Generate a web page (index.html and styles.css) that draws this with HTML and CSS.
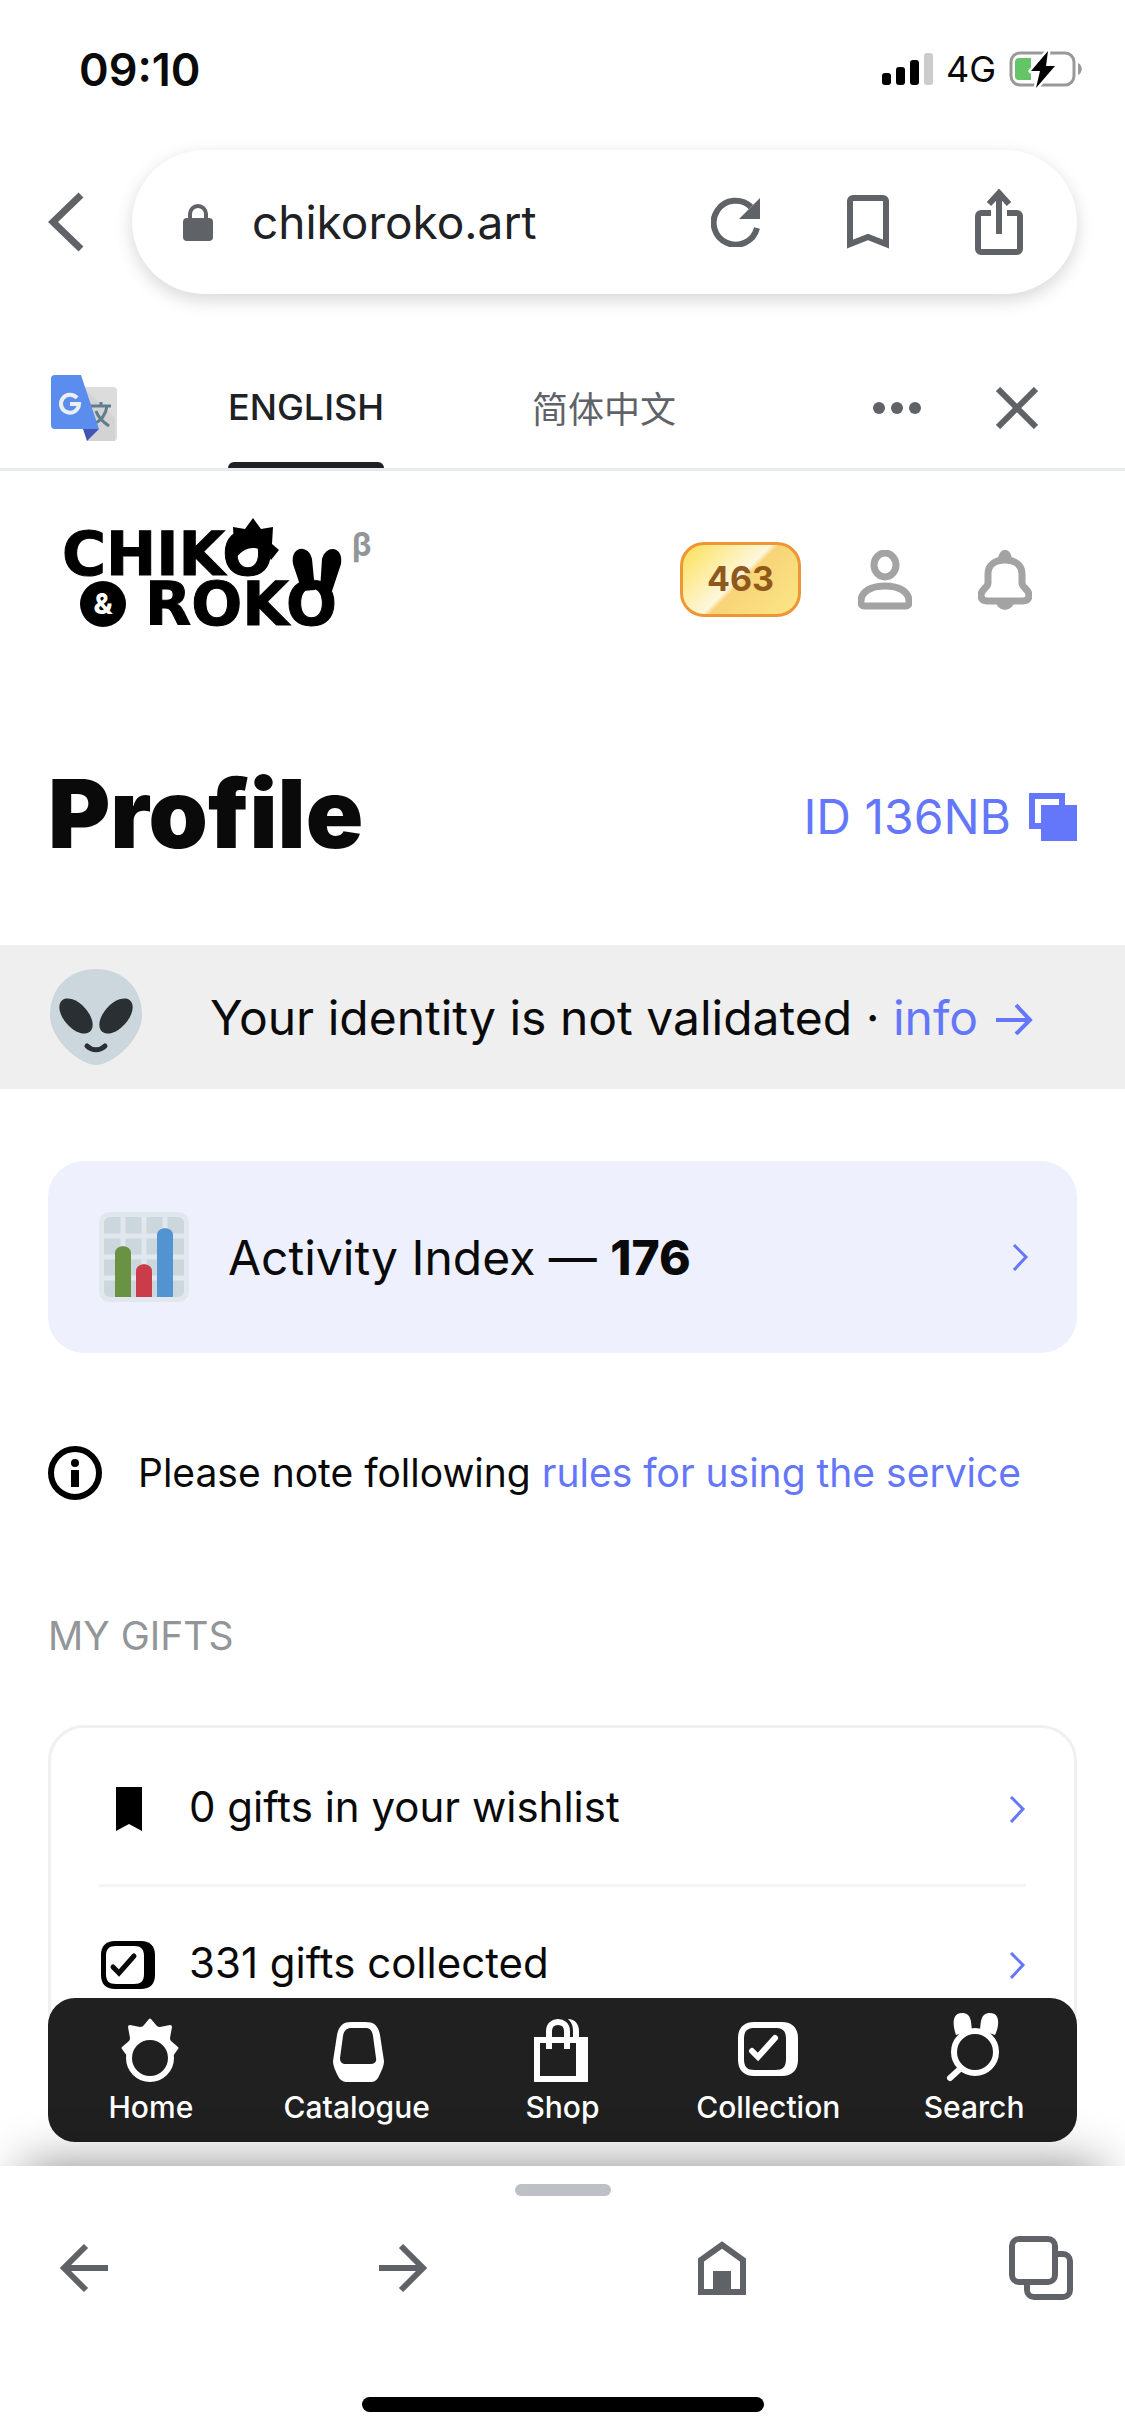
FILE: index.html
```html
<!DOCTYPE html>
<html lang="en">
<head>
<meta charset="utf-8">
<meta name="viewport" content="width=device-width, initial-scale=1">
<title>Profile – Chiko &amp; Roko</title>
<link rel="stylesheet" href="styles.css">
</head>
<body>
<div class="screen">
  <div class="status">
    <span class="status-time">09:10</span>
    <div class="status-right">
      <svg width="51" height="32" viewBox="0 0 51 32" aria-hidden="true">
        <rect x="0" y="20" width="9" height="12" rx="3"/>
        <rect x="14" y="14" width="9" height="18" rx="3"/>
        <rect x="28" y="7" width="9" height="25" rx="3"/>
        <rect x="42" y="0" width="9" height="32" rx="3" fill="#ccc"/>
      </svg>
      <span class="status-net">4G</span>
      <svg width="74" height="38" viewBox="0 0 74 38" aria-hidden="true">
        <rect x="2" y="3" width="63" height="32" rx="9" fill="none" stroke="#999" stroke-width="3"/>
        <path d="M69 13c5 2 5 10 0 12z" fill="#999"/>
        <path d="M10 8h12v22H10a4 4 0 0 1-4-4V12a4 4 0 0 1 4-4z" fill="#65c466"/>
        <path d="M39 1L22 21h9l-4 17L46 16h-9z" stroke="#fff" stroke-width="5" stroke-linejoin="round"/>
        <path d="M39 1L22 21h9l-4 17L46 16h-9z"/>
      </svg>
    </div>
  </div>

  <header class="browser">
    <button class="icon-btn" aria-label="Back">
      <svg width="36" height="60" viewBox="0 0 36 60"><path d="M33 3L5 30l28 27" fill="none" stroke="#5f6368" stroke-width="7"/></svg>
    </button>
    <div class="omnibox">
      <svg width="30" height="39" viewBox="0 0 30 39" fill="#5f6368" aria-hidden="true">
        <path d="M7 18V11a8 8 0 0 1 16 0v7" fill="none" stroke="#5f6368" stroke-width="4"/>
        <rect x="0" y="15" width="30" height="23" rx="4"/>
      </svg>
      <span class="url">chikoroko.art</span>
      <button class="icon-btn" aria-label="Reload">
        <svg width="50" height="50" viewBox="0 0 50 50"><path d="M46 31A22 22 0 1 1 40 10" fill="none" stroke="#5f6368" stroke-width="6"/><path d="M49 1v21H28z" fill="#5f6368"/></svg>
      </button>
      <button class="icon-btn" aria-label="Bookmark">
        <svg width="42" height="54" viewBox="0 0 42 54"><path d="M3 49V6a3 3 0 0 1 3-3h30a3 3 0 0 1 3 3v43L21 42z" fill="none" stroke="#5f6368" stroke-width="6"/></svg>
      </button>
      <button class="icon-btn" aria-label="Share">
        <svg width="48" height="66" viewBox="0 0 48 66" fill="none" stroke="#5f6368" stroke-width="6"><path d="M16 24H6a3 3 0 0 0-3 3v33a3 3 0 0 0 3 3h36a3 3 0 0 0 3-3V27a3 3 0 0 0-3-3H32M24 45V6"/><path d="M14 15L24 4l10 11"/></svg>
      </button>
    </div>
  </header>

  <div class="translate">
    <svg width="66" height="66" viewBox="0 0 66 66" aria-hidden="true">
      <path d="M26 12h36a4 4 0 0 1 4 4v46a4 4 0 0 1-4 4H36z" fill="#dcdcdc"/>
      <path d="M33 13l31 30v23H36z" fill="#d3d3d3"/>
      <path d="M40 31h20M50 27v4M43 49c8-4 12-10 13-18M45 36c2 6 7 11 13 15" fill="none" stroke="#607d8b" stroke-width="3"/>
      <path d="M32 54h16L36 66z" fill="#4554b4"/>
      <path d="M4 0h26l18 54H4a4 4 0 0 1-4-4V4a4 4 0 0 1 4-4z" fill="#5b8def"/>
      <path d="M26 23a9 9 0 1 0 2 6h-9" fill="none" stroke="#eee" stroke-width="4"/>
    </svg>
    <div class="tabs">
      <button class="tab tab-on">ENGLISH</button>
      <button class="tab" lang="zh-CN">简体中文</button>
    </div>
    <div class="translate-actions">
      <button class="icon-btn" aria-label="More">
        <svg width="48" height="12" viewBox="0 0 48 12" fill="#5f6368"><circle cx="6" cy="6" r="6"/><circle cx="24" cy="6" r="6"/><circle cx="42" cy="6" r="6"/></svg>
      </button>
      <button class="icon-btn" aria-label="Close">
        <svg width="42" height="42" viewBox="0 0 42 42"><path d="M2 2l38 38M40 2L2 40" stroke="#5f6368" stroke-width="6"/></svg>
      </button>
    </div>
  </div>

  <div class="page">
    <header class="site-head">
      <a class="logo" href="#" aria-label="Chiko &amp; Roko beta">
        <svg width="312" height="124" viewBox="0 0 312 124">
          <g class="logo-type">
            <text x="-2" y="57">CHIKO</text>
            <text x="81" y="107">ROKO</text>
          </g>
          <path d="M171 42l-8-10 7-6-1-17 12 2 8-11 8 11 12-2-1 17 7 6-8 10c-9-16-27-16-36 0z"/>
          <path d="M238 73l-9-27c-3-19 16-20 19-5l3 31zM256 72l2-31c4-15 22-13 19 5l-9 27z"/>
          <circle cx="39" cy="86" r="23"/>
          <text class="logo-amp" x="39" y="96">&amp;</text>
          <text class="logo-beta" x="288" y="38">β</text>
        </svg>
      </a>
      <div class="head-actions">
        <a class="coins" href="#">463</a>
        <a class="head-icon" href="#" aria-label="Account">
          <svg width="54" height="60" viewBox="0 0 54 60" fill="none" stroke="#a3a3a3" stroke-width="7"><ellipse cx="27" cy="15" rx="11" ry="12"/><path d="M6 56h42a3 3 0 0 0 3-3c1-12-11-17-24-17S2 41 3 53a3 3 0 0 0 3 3z"/></svg>
        </a>
        <a class="head-icon" href="#" aria-label="Notifications">
          <svg width="54" height="60" viewBox="0 0 54 60" fill="#a3a3a3"><path d="M10 24c0-9 7-14 17-14s17 5 17 14v9c0 5 7 6 7 12 0 4-2 6-6 6H9c-4 0-6-2-6-6 0-6 7-7 7-12z" fill="none" stroke="#a3a3a3" stroke-width="7"/><path d="M20 11c0-15 14-15 14 0zM18 53h18c-3 9-15 9-18 0z"/></svg>
        </a>
      </div>
    </header>

    <div class="title-row">
      <h1>Profile</h1>
      <button class="copy-id">ID 136NB
        <svg width="48" height="48" viewBox="0 0 48 48" aria-hidden="true"><path d="M0 0h36v12h-6V6H6v24h6v6H0z"/><path d="M12 12h36v36H12z"/></svg>
      </button>
    </div>

    <div class="banner">
      <svg width="92" height="96" viewBox="0 0 92 96" aria-hidden="true">
        <path d="M46 0c27 0 46 19 46 46 0 25-30 50-46 50S0 71 0 46C0 19 19 0 46 0z" fill="#ccd6dd"/>
        <g fill="#292f33"><ellipse cx="26" cy="47" rx="12" ry="21" transform="rotate(-42 26 47)"/><ellipse cx="66" cy="47" rx="12" ry="21" transform="rotate(42 66 47)"/></g>
        <path d="M37 77c5 5 13 5 18 0" fill="none" stroke="#292f33" stroke-width="5" stroke-linecap="round"/>
      </svg>
      <p>Your identity is not validated · <a href="#">info <svg class="go" width="37" height="32" viewBox="0 0 37 32" aria-hidden="true"><path d="M0 17h34M20 2l14 15-14 14" fill="none" stroke="#6477fa" stroke-width="4"/></svg></a></p>
    </div>

    <a class="activity" href="#">
      <svg width="90" height="90" viewBox="0 0 90 90" aria-hidden="true">
        <rect width="90" height="90" rx="10" fill="#e1e8ed"/>
        <rect x="5" y="5" width="80" height="80" rx="6" fill="#ccd6dd"/>
        <path d="M24 5v80M45 5v80M66 5v80M5 24h80M5 45h80M5 66h80" stroke="#e1e8ed" stroke-width="5"/>
        <path d="M16 85V41c0-9 16-9 16 0v44z" fill="#699343"/>
        <path d="M37 85V59c0-9 16-9 16 0v26z" fill="#ca3c49"/>
        <path d="M58 85V23c0-9 16-9 16 0v62z" fill="#5293d2"/>
      </svg>
      <span>Activity Index — <b>176</b></span>
      <svg class="chev" width="17" height="27" viewBox="0 0 17 27" aria-hidden="true"><path d="M2 1l12 12L2 26"/></svg>
    </a>

    <div class="note">
      <svg width="54" height="54" viewBox="0 0 54 54" aria-hidden="true"><circle cx="27" cy="27" r="24" fill="none" stroke="#000" stroke-width="6"/><circle cx="27" cy="17" r="4"/><path d="M23 24h8v17h-8z"/></svg>
      <p>Please note following <a href="#">rules for using the service</a></p>
    </div>

    <h2>MY GIFTS</h2>
    <ul class="gifts">
      <li><a href="#">
        <svg width="54" height="48" viewBox="0 0 54 48" aria-hidden="true"><path d="M15 2h26v44l-13-7-13 7z"/></svg>
        <span>0 gifts in your wishlist</span>
        <svg class="chev" width="17" height="27" viewBox="0 0 17 27" aria-hidden="true"><path d="M2 1l12 12L2 26"/></svg>
      </a></li>
      <li><a href="#">
        <svg width="54" height="48" viewBox="0 0 54 48" aria-hidden="true"><path fill-rule="evenodd" d="M14 0h26c9 0 14 5 14 14v20c0 9-5 14-14 14H14C5 48 0 43 0 34V14C0 5 5 0 14 0zm1 5c-7 0-10 3-10 10v18c0 7 3 10 10 10h18c7 0 10-3 10-10V15c0-7-3-10-10-10z"/><path d="M12 26l6 6 15-17" fill="none" stroke="#0a0a0a" stroke-width="5" stroke-linecap="round"/></svg>
        <span>331 gifts collected</span>
        <svg class="chev" width="17" height="27" viewBox="0 0 17 27" aria-hidden="true"><path d="M2 1l12 12L2 26"/></svg>
      </a></li>
    </ul>

    <nav class="dock">
      <a href="#">
        <svg width="60" height="72" viewBox="1 0 60 72" fill="#fff" aria-hidden="true"><path d="M7 40l-5-7q-1-1 0-2l7-6q1-1 1-3L8 11q0-2 2-2l10 2q3 0 4-2l5-6q1-1 2 0l5 6q1 2 4 2l10-2q2 0 2 2l-2 11q0 2 1 3l7 6q1 1 0 2l-5 7z"/><circle cx="30" cy="42" r="24"/><circle cx="30" cy="42" r="18" fill="#202020"/></svg>
        Home</a>
      <a href="#">
        <svg width="60" height="72" viewBox="1 0 60 72" fill="#fff" aria-hidden="true"><path fill-rule="evenodd" d="M25 6h14c9 0 13 3 15 13l4 26c0 5-3 11-5 15-2 4-4 6-9 6H22c-5 0-8-2-10-6-2-4-5-10-5-15l4-26C13 9 18 6 25 6zm1 6c-5 0-8 2-9 8l-3 22c0 4 2 6 6 6h24c4 0 7-2 6-6l-3-22c-1-6-3-8-8-8z"/></svg>
        Catalogue</a>
      <a href="#">
        <svg width="60" height="72" viewBox="2 0 60 72" fill="none" stroke="#fff" stroke-width="6" aria-hidden="true"><path d="M7 24h42v39H7z"/><path d="M46 21h12v45H46z" fill="#fff" stroke="none"/><path d="M19 33V15c0-12 18-12 18 0v18"/><path d="M43 21v-6c0-6-2-9-5-12 7 0 11 5 11 12v6z" fill="#fff" stroke="none"/></svg>
        Shop</a>
      <a href="#">
        <svg width="60" height="72" viewBox="0 0 60 72" fill="#fff" aria-hidden="true"><path fill-rule="evenodd" d="M16 6h28c10 0 16 6 16 16v22c0 10-6 16-16 16H16C6 60 0 54 0 44V22C0 12 6 6 16 6zm1 6c-8 0-11 3-11 11v20c0 8 3 11 11 11h20c8 0 11-3 11-11V23c0-8-3-11-11-11z"/><path d="M14 35l6 6 17-19" fill="none" stroke="#fff" stroke-width="6" stroke-linecap="round"/></svg>
        Collection</a>
      <a href="#">
        <svg width="60" height="72" viewBox="2 0 60 72" fill="#fff" aria-hidden="true"><path d="M14 19c-3-8-5-22 6-22 10 0 9 10 10 17zM38 14c1-7 0-17 10-17 11 0 9 14 5 22z"/><circle cx="33" cy="36" r="21" fill="none" stroke="#fff" stroke-width="6"/><path d="M19 52L8 62" stroke="#fff" stroke-width="6" stroke-linecap="round"/></svg>
        Search</a>
    </nav>
  </div>

  <footer class="toolbar">
    <span class="grip"></span>
    <div class="tools">
      <button class="icon-btn" aria-label="Go back"><svg width="64" height="64" viewBox="0 0 64 64"><path d="M56 32H13M34 10L12 32l22 22" fill="none" stroke="#5f6368" stroke-width="6"/></svg></button>
      <button class="icon-btn" aria-label="Go forward"><svg width="64" height="64" viewBox="0 0 64 64"><path d="M8 32h43M30 10l22 22-22 22" fill="none" stroke="#5f6368" stroke-width="6"/></svg></button>
      <button class="icon-btn" aria-label="Home page"><svg width="64" height="64" viewBox="0 0 64 64"><path d="M11 24L32 9l21 15v32H11z" fill="none" stroke="#5f6368" stroke-width="6"/><path d="M23 35h18v22H23z" fill="#5f6368"/></svg></button>
      <button class="icon-btn" aria-label="Tabs"><svg width="64" height="64" viewBox="0 0 64 64" fill="none" stroke="#5f6368" stroke-width="6"><rect x="3" y="3" width="43" height="43" rx="7"/><path d="M48 18h6a7 7 0 0 1 7 7v29a7 7 0 0 1-7 7H25a7 7 0 0 1-7-7v-6"/></svg></button>
    </div>
    <span class="home-bar"></span>
  </footer>
</div>
</body>
</html>
```
FILE: styles.css
```css
* { box-sizing: border-box; }

body {
  margin: 0;
  background: #fff;
  color: #0a0a0a;
  font-family: Inter, "Noto Sans CJK SC", sans-serif;
  font-size: 48px;
}

a { color: #6477fa; text-decoration: none; }
p, h1, h2, ul { margin: 0; padding: 0; }
ul { list-style: none; }
svg { flex: none; }

button {
  padding: 0;
  border: 0;
  background: none;
  color: inherit;
  font: inherit;
  cursor: pointer;
}

.icon-btn, .head-icon { display: flex; flex: none; }

.screen {
  display: flex;
  flex-direction: column;
  height: 100vh;
}

/* Status bar */
.status {
  display: flex;
  flex: none;
  align-items: center;
  justify-content: space-between;
  height: 138px;
  padding: 0 42px 0 79px;
}
.status-time { font-size: 45px; font-weight: 600; }
.status-right { display: flex; align-items: center; gap: 13px; }
.status-net { font-size: 36px; }

/* Address bar */
.browser {
  display: flex;
  flex: none;
  align-items: center;
  gap: 48px;
  padding: 12px 48px 0;
}
.omnibox {
  display: flex;
  flex: 1;
  align-items: center;
  height: 144px;
  padding: 0 54px 0 51px;
  border-radius: 72px;
  color: #202124;
  font-size: 46px;
  box-shadow: 0 6px 18px rgba(0, 0, 0, .16);
}
.url { flex: 1; padding-left: 39px; }
.omnibox .icon-btn + .icon-btn { margin-left: 86px; }

/* Translate bar */
.translate {
  display: flex;
  flex: none;
  align-items: center;
  gap: 111px;
  height: 129px;
  margin-top: 48px;
  padding: 6px 87px 0 51px;
  border-bottom: 3px solid #e8eaed;
}
.tabs { display: flex; flex: 1; align-self: stretch; gap: 148px; }
.tab {
  padding: 4px 0 0;
  border-bottom: 6px solid transparent;
  color: #5f6368;
  font-size: 36px;
}
.tab-on {
  position: relative;
  color: #202124;
  font-weight: 500;
}
.tab-on::after {
  content: "";
  position: absolute;
  inset: auto 0 -6px;
  height: 6px;
  border-radius: 6px 6px 0 0;
  background: #202124;
}
.translate-actions { display: flex; align-items: center; gap: 75px; }

/* Page */
.page {
  position: relative;
  flex: 1;
  min-height: 0;
  overflow: hidden;
}

.site-head {
  display: flex;
  align-items: center;
  justify-content: space-between;
  height: 217px;
  padding: 0 93px 0 64px;
}
.logo svg { display: block; overflow: visible; }
.logo-type {
  font-family: "DejaVu Sans", sans-serif;
  font-size: 60px;
  font-weight: 700;
  stroke: #000;
  stroke-width: 1px;
}
.logo-amp { fill: #fff; font-size: 28px; font-weight: 800; text-anchor: middle; }
.logo-beta { fill: #929699; font-size: 32px; font-weight: 700; }

.head-actions { display: flex; align-items: center; }
.coins {
  padding: 14px 24px 16px;
  border: 3px solid #ef9533;
  border-radius: 24px;
  background: linear-gradient(135deg, #fae057 0%, #fef7dc 48%, #f8d477 52%, #fae785 100%);
  color: #90581c;
  font-size: 34px;
  font-weight: 700;
  line-height: 39px;
}
.coins + .head-icon { margin-left: 57px; }
.head-icon + .head-icon { margin-left: 66px; }

.title-row {
  display: flex;
  align-items: center;
  justify-content: space-between;
  height: 257px;
  padding: 0 48px;
}
h1 { padding-bottom: 6px; font-size: 95px; font-weight: 900; line-height: 116px; }
.copy-id {
  display: flex;
  align-items: center;
  gap: 18px;
  color: #6477fa;
}
.copy-id svg { fill: #6477fa; }

.banner {
  display: flex;
  align-items: center;
  gap: 68px;
  height: 144px;
  padding: 0 50px;
  background: #efefef;
}
.go { margin-left: 4px; }

.activity {
  display: flex;
  align-items: center;
  gap: 39px;
  height: 192px;
  margin: 72px 48px 0;
  padding: 0 48px 0 51px;
  border-radius: 36px;
  background: #eef0fd;
  color: #0a0a0a;
}
.activity b { font-weight: 800; }
.chev { margin-left: auto; fill: none; stroke: #6477fa; stroke-width: 3; }

.note {
  display: flex;
  align-items: center;
  gap: 36px;
  margin: 93px 48px 0;
  font-size: 39px;
  line-height: 54px;
}

h2 {
  margin: 109px 48px 0;
  color: #929699;
  font-size: 39px;
  font-weight: 400;
  line-height: 54px;
}

.gifts {
  margin: 62px 48px 0;
  padding: 0 48px;
  border: 3px solid #f0f0f0;
  border-radius: 36px;
}
.gifts li + li { border-top: 3px solid #f4f4f4; }
.gifts a {
  display: flex;
  align-items: center;
  gap: 34px;
  height: 156px;
  padding-left: 2px;
  color: #0a0a0a;
  font-size: 42px;
}
.gifts li:first-child a { padding-top: 6px; }
.gifts span { padding-bottom: 6px; }

/* Bottom navigation, floating over the page */
.dock {
  position: absolute;
  inset: auto 48px 24px;
  display: flex;
  height: 144px;
  border-radius: 27px;
  background: #202020;
}
.dock a {
  display: flex;
  flex: 1 0 0;
  flex-direction: column;
  align-items: center;
  padding-top: 18px;
  color: #fff;
  font-size: 30px;
  font-weight: 500;
  line-height: 38px;
}
.dock svg { overflow: visible; }

/* Browser toolbar */
.toolbar {
  position: relative;
  display: flex;
  flex: none;
  flex-direction: column;
  align-items: center;
  height: 270px;
  padding: 18px 52px 24px;
  background: #fff;
  box-shadow: 0 -24px 48px -24px rgba(0, 0, 0, .46);
}
.grip { width: 96px; height: 12px; border-radius: 6px; background: #bdc1c6; }
.tools {
  display: flex;
  align-self: stretch;
  justify-content: space-between;
  margin-top: 40px;
}
.home-bar {
  width: 402px;
  height: 15px;
  margin-top: auto;
  border-radius: 8px;
  background: #000;
}
```
